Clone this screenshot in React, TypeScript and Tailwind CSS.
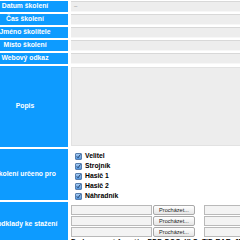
import React from "react";

const blue = "bg-[#0d9bff]";

function Label({ children, h }: { children: React.ReactNode; h: string }) {
  return (
    <div className={`${blue} ${h} w-[86px] shrink-0 flex items-center justify-center text-white font-bold text-[6.8px] whitespace-nowrap overflow-visible`}>
      {children}
    </div>
  );
}

function Check({ label }: { label: string }) {
  return (
    <div className="flex items-center gap-[3px] h-[10px]">
      <span className="w-[7px] h-[7px] border border-[#5a7fae] bg-gradient-to-b from-[#a9cdf3] to-[#4f94dc] rounded-[1px] flex items-center justify-center">
        <svg width="7" height="7" viewBox="0 0 7 7">
          <path d="M1.2 3.4 L2.9 5.2 L6.3 0.6" fill="none" stroke="#14305a" strokeWidth="1.3" />
        </svg>
      </span>
      <span className="text-[6.8px] font-bold text-black">{label}</span>
    </div>
  );
}

function FileRow() {
  return (
    <div className="flex items-center h-[10px]">
      <div className="w-[81px] h-[10px] shrink-0 bg-[#f3f3f3] border border-[#b9b9b9]" />
      <div className="ml-[1px] w-[42px] h-[10px] shrink-0 rounded-[2px] border border-[#a8a8a8] bg-gradient-to-b from-white to-[#e6e6e6] flex items-center justify-center text-[5.6px] text-[#222]">
        Procházet...
      </div>
      <div className="ml-[9px] w-[60px] h-[10px] shrink-0 bg-[#f3f3f3] border border-[#b9b9b9]" />
    </div>
  );
}

function Input({ children }: { children?: React.ReactNode }) {
  return (
    <div className="flex-1 h-full bg-[#ededed] border-t border-[#d8d8d8] border-b border-b-[#f7f7f7] flex items-center pl-[3px] text-[6px] text-[#888]">
      {children}
    </div>
  );
}

export default function App() {
  return (
    <div className="w-[240px] h-[240px] overflow-hidden bg-white" style={{ fontFamily: '"Liberation Sans", Arial, sans-serif' }}>
      <div className="ml-[-18px] w-[300px] pt-[1px] flex flex-col gap-[2px]">
        {["Datum školení", "Čas školení", "Jméno školitele", "Místo školení", "Webový odkaz"].map((t, i) => (
          <div key={t} className="flex gap-[3px] h-[11px]">
            <Label h="h-[11px]">{t}</Label>
            <Input>{i === 0 ? "‒" : null}</Input>
          </div>
        ))}
        <div className="flex gap-[3px] h-[81px]">
          <Label h="h-[81px]">Popis</Label>
          <div className="flex-1 my-[1px] bg-[#ededed] border border-[#e2e2e2]" />
        </div>
        <div className="flex gap-[3px] h-[51px]">
          <Label h="h-[51px]">Školení určeno pro</Label>
          <div className="flex-1 flex flex-col pt-[2px] pl-[4px]">
            <Check label="Velitel" />
            <Check label="Strojník" />
            <Check label="Hasič 1" />
            <Check label="Hasič 2" />
            <Check label="Náhradník" />
          </div>
        </div>
        <div className="flex gap-[3px] h-[44px]">
          <Label h="h-[44px]">Podklady ke stažení</Label>
          <div className="flex-1 flex flex-col pt-[3px] gap-[1px]">
            <FileRow />
            <FileRow />
            <FileRow />
            <div className="text-[7px] font-bold text-black whitespace-nowrap leading-[8px]">
              Podporované formáty: PDF, DOC, XLS, ZIP, RAR, JPG, PNG
            </div>
          </div>
        </div>
      </div>
    </div>
  );
}
